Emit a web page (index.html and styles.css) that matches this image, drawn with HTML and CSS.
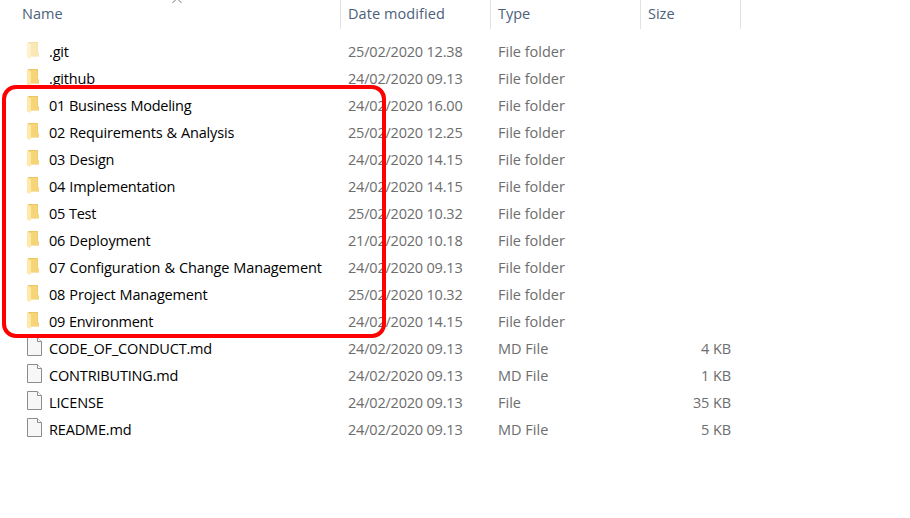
FILE: index.html
```html
<!DOCTYPE html>
<html lang="en">
<head>
<meta charset="utf-8">
<title>Files</title>
<link rel="stylesheet" href="styles.css">
</head>
<body>
<svg class="defs" aria-hidden="true">
  <symbol id="folder" viewBox="0 0 13 17">
    <path d="M1 0H11V10L12 11V14.500H3Z" fill="#edc563"/>
    <path d="M4 1H10.500V10.500L12 11V14H4Z" fill="#f5d578"/>
    <path d="M0 0.500L4 2V14.500L3 17L0 15.500Z" fill="#ffe9a8"/>
  </symbol>
  <symbol id="file" viewBox="0 0 15 19">
    <path d="M.5 .5H10.500L14.500 4.500V18.500H.5Z" fill="#f7f7f7" stroke="#8c8c8c"/>
    <path d="M10.500 .5V4.500H14.500" fill="#fff" stroke="#8c8c8c"/>
  </symbol>
</svg>
<main class="explorer">
  <header class="row head"><span class="name">Name</span><span class="date">Date modified</span><span class="type">Type</span><span class="size">Size</span></header>
  <svg class="sort" viewBox="0 0 10 4"><path d="M.5 3L5-1.500L9.500 3" fill="none" stroke="#777"/></svg>
  <section class="list">
    <div class="row faded"><svg class="folder"><use href="#folder"/></svg><span class="name">.git</span><span class="date">25/02/2020 12.38</span><span class="type">File folder</span><span class="size"></span></div>
    <div class="row"><svg class="folder"><use href="#folder"/></svg><span class="name">.github</span><span class="date">24/02/2020 09.13</span><span class="type">File folder</span><span class="size"></span></div>
    <div class="row"><svg class="folder"><use href="#folder"/></svg><span class="name tight">01 Business Modeling</span><span class="date">24/02/2020 16.00</span><span class="type">File folder</span><span class="size"></span></div>
    <div class="row"><svg class="folder"><use href="#folder"/></svg><span class="name">02 Requirements &amp; Analysis</span><span class="date">25/02/2020 12.25</span><span class="type">File folder</span><span class="size"></span></div>
    <div class="row"><svg class="folder"><use href="#folder"/></svg><span class="name">03 Design</span><span class="date">24/02/2020 14.15</span><span class="type">File folder</span><span class="size"></span></div>
    <div class="row"><svg class="folder"><use href="#folder"/></svg><span class="name">04 Implementation</span><span class="date">24/02/2020 14.15</span><span class="type">File folder</span><span class="size"></span></div>
    <div class="row"><svg class="folder"><use href="#folder"/></svg><span class="name tight">05 Test</span><span class="date">25/02/2020 10.32</span><span class="type">File folder</span><span class="size"></span></div>
    <div class="row"><svg class="folder"><use href="#folder"/></svg><span class="name">06 Deployment</span><span class="date">21/02/2020 10.18</span><span class="type">File folder</span><span class="size"></span></div>
    <div class="row"><svg class="folder"><use href="#folder"/></svg><span class="name wide">07 Configuration &amp; Change Management</span><span class="date">24/02/2020 09.13</span><span class="type">File folder</span><span class="size"></span></div>
    <div class="row"><svg class="folder"><use href="#folder"/></svg><span class="name">08 Project Management</span><span class="date">25/02/2020 10.32</span><span class="type">File folder</span><span class="size"></span></div>
    <div class="row"><svg class="folder"><use href="#folder"/></svg><span class="name tight">09 Environment</span><span class="date">24/02/2020 14.15</span><span class="type">File folder</span><span class="size"></span></div>
    <div class="row"><svg class="file"><use href="#file"/></svg><span class="name">CODE_OF_CONDUCT.md</span><span class="date">24/02/2020 09.13</span><span class="type">MD File</span><span class="size">4 KB</span></div>
    <div class="row"><svg class="file"><use href="#file"/></svg><span class="name">CONTRIBUTING.md</span><span class="date">24/02/2020 09.13</span><span class="type">MD File</span><span class="size">1 KB</span></div>
    <div class="row"><svg class="file"><use href="#file"/></svg><span class="name">LICENSE</span><span class="date">24/02/2020 09.13</span><span class="type">File</span><span class="size">35 KB</span></div>
    <div class="row"><svg class="file"><use href="#file"/></svg><span class="name">README.md</span><span class="date">24/02/2020 09.13</span><span class="type">MD File</span><span class="size">5 KB</span></div>
  </section>
  <div class="highlight"></div>
</main>
</body>
</html>
```
FILE: styles.css
```css
body { margin: 0; background: #fff; overflow: hidden; }
.defs { position: absolute; width: 0; height: 0; }
.explorer { position: relative; width: 910px; height: 518px; font: 14.5px/27px "Open Sans", sans-serif; color: #6d6d6d; }
.row { display: grid; grid-template-columns: 22px 299px 150px 150px 83px; height: 27px; padding-left: 27px; white-space: nowrap; }
.name { color: #000; letter-spacing: -.17px; word-spacing: .5px; }
.tight { letter-spacing: -.25px; word-spacing: .3px; }
.wide { letter-spacing: -.13px; }
.date { letter-spacing: -.2px; }
.type { letter-spacing: 0; }
.size { text-align: right; letter-spacing: -.1px; }
.head { grid-template-columns: 319px 150px 150px 100px; height: 29px; padding-left: 22px; }
.head span { box-sizing: border-box; color: #4c607a; letter-spacing: 0; text-align: left; border-right: 1px solid #e2e2e2; }
.head .date { letter-spacing: .08px; }
.head .date, .head .type, .head .size { padding-left: 7px; }
.sort { position: absolute; left: 172px; top: 0; width: 10px; height: 4px; }
.list { padding-top: 9px; }
.folder { width: 13px; height: 17px; margin-top: 4px; }
.file { width: 15px; height: 19px; margin-top: 2px; }
.faded .folder { opacity: .55; }
.highlight { position: absolute; left: 2px; top: 85px; width: 384px; height: 253px; box-sizing: border-box; border: 4px solid #f00; border-radius: 14px; }
```
